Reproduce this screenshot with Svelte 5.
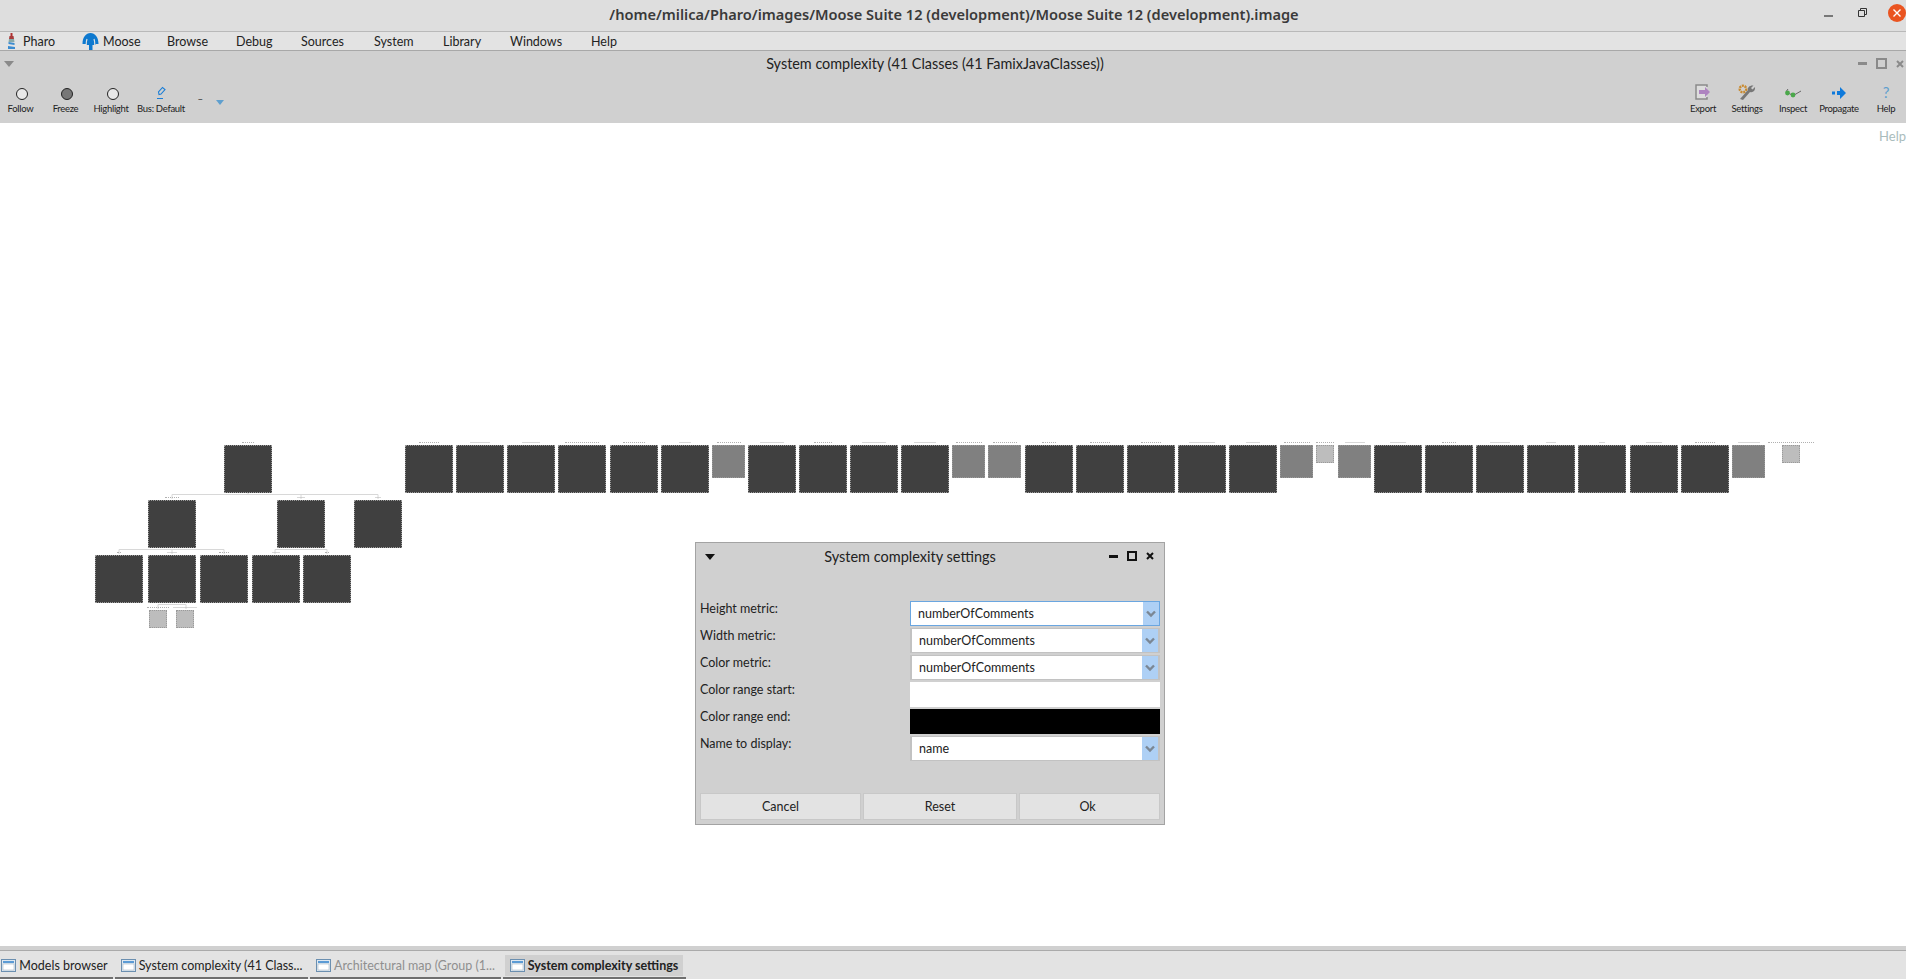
<script lang="ts">
	const menu = [
		{ label: 'Pharo', w: 75 },
		{ label: 'Moose', w: 85 },
		{ label: 'Browse', w: 69 },
		{ label: 'Debug', w: 65 },
		{ label: 'Sources', w: 73 },
		{ label: 'System', w: 69 },
		{ label: 'Library', w: 67 },
		{ label: 'Windows', w: 81 },
		{ label: 'Help', w: 40 }
	];

	const D = 48;
	const M = 33;
	const L = 18;

	// x, y, size, height, tone, label width
	const nodes = [
		[224, 445, D, D, 'dark', 12],
		[148, 500, D, D, 'dark', 14],
		[277, 500, D, D, 'dark', 7],
		[354, 500, D, D, 'dark', 5],
		[95, 555, D, D, 'dark', 4],
		[148, 555, D, D, 'dark', 9],
		[200, 555, D, D, 'dark', 10],
		[252, 555, D, D, 'dark', 7],
		[303, 555, D, D, 'dark', 4],
		[149, 610, L, L, 'light', 22],
		[176, 610, L, L, 'light', 23],
		[405, 445, D, D, 'dark', 20],
		[456, 445, D, D, 'dark', 19],
		[507, 445, D, D, 'dark', 17],
		[558, 445, D, D, 'dark', 34],
		[610, 445, D, D, 'dark', 22],
		[661, 445, D, D, 'dark', 11],
		[712, 445, M, M, 'mid', 24],
		[748, 445, D, D, 'dark', 23],
		[799, 445, D, D, 'dark', 18],
		[850, 445, D, D, 'dark', 23],
		[901, 445, D, D, 'dark', 21],
		[952, 445, M, M, 'mid', 26],
		[988, 445, M, M, 'mid', 24],
		[1025, 445, D, D, 'dark', 14],
		[1076, 445, D, D, 'dark', 20],
		[1127, 445, D, D, 'dark', 20],
		[1178, 445, D, D, 'dark', 25],
		[1229, 445, D, D, 'dark', 13],
		[1280, 445, M, M, 'mid', 26],
		[1316, 445, L, L, 'light', 18],
		[1338, 445, M, M, 'mid', 19],
		[1374, 445, D, D, 'dark', 15],
		[1425, 445, D, D, 'dark', 14],
		[1476, 445, D, D, 'dark', 19],
		[1527, 445, D, D, 'dark', 9],
		[1578, 445, D, D, 'dark', 5],
		[1630, 445, D, D, 'dark', 15],
		[1681, 445, D, D, 'dark', 20],
		[1732, 445, M, M, 'mid', 21],
		[1782, 445, L, L, 'light', 46]
	] as const;

	const metrics = [
		{ label: 'Height metric:', value: 'numberOfComments', focus: true },
		{ label: 'Width metric:', value: 'numberOfComments' },
		{ label: 'Color metric:', value: 'numberOfComments' },
		{ label: 'Color range start:', colour: 'white' },
		{ label: 'Color range end:', colour: 'black' },
		{ label: 'Name to display:', value: 'name' }
	];

	const tasks = [
		{ label: 'Models browser', w: 113 },
		{ label: 'System complexity (41 Class...', w: 193 },
		{ label: 'Architectural map (Group (1...', w: 191, faded: true },
		{ label: 'System complexity settings', w: 183, active: true }
	];
</script>

<div class="screen">
	<header class="titlebar">
		<span class="title">/home/milica/Pharo/images/Moose Suite 12 (development)/Moose Suite 12 (development).image</span>
		<div class="wm">
			<svg width="14" height="14" viewBox="0 0 14 14"><path d="M2 10h9" stroke="#333" stroke-width="1.2" /></svg>
			<svg width="14" height="14" viewBox="0 0 14 14"><path d="M3.5 4.5h6v6h-6zM5.5 4.5v-2h6v6h-2" fill="none" stroke="#333" /></svg>
			<span class="close">
				<svg width="10" height="10" viewBox="0 0 10 10"><path d="M1.5 1.5l7 7M8.5 1.5l-7 7" stroke="#fff" stroke-width="1.4" /></svg>
			</span>
		</div>
	</header>

	<nav class="menubar">
		{#each menu as item, i}
			<div class="menu-item" style="width: {item.w}px">
				{#if i === 0}
					<svg class="pharo" width="9" height="18" viewBox="0 0 9 18">
						<path d="M3.5 1h2v3h-2z" fill="#b03030" />
						<path d="M2.5 4h4l.5 3H2z" fill="#a83a3a" />
						<path d="M2 7h5l.5 3h-6z" fill="#8aa" />
						<path d="M1.5 10l6 1v2l-6-1zM1 14l7 1v2H1z" fill="#3b8bd0" />
					</svg>
				{:else if i === 1}
					<svg class="moose" width="17" height="18" viewBox="0 0 17 18">
						<path d="M0.5 12C0.500 5 4 1 8.500 1S16.500 5 16.500 12h-3V13h-3v5h-3.500v-5h-3V12z" fill="#0e79cf" />
						<path d="M5 7C4.400 8.500 4.200 10 4.200 13M12 7c.6 1.500.8 3 .8 6" fill="none" stroke="#e3e3e3" stroke-width="1.200" />
					</svg>
				{/if}
				<span>{item.label}</span>
			</div>
		{/each}
	</nav>

	<section class="panel">
		<div class="panel-title">
			<svg class="collapse" width="10" height="6" viewBox="0 0 10 6"><path d="M0 0h10L5 6z" fill="#8a8a8a" /></svg>
			<span>System complexity (41 Classes (41 FamixJavaClasses))</span>
			<div class="panel-controls">
				<span class="ctl-min"></span>
				<span class="ctl-max"></span>
				<svg width="8" height="8" viewBox="0 0 8 8"><path d="M1 1l6 6M7 1l-6 6" stroke="#8a8a8a" stroke-width="2" /></svg>
			</div>
		</div>
		<div class="toolbar">
			<div class="tools left">
				<div class="tool" style="width: 41px">
					<span class="radio"></span>
					<small>Follow</small>
				</div>
				<div class="tool" style="width: 49px">
					<span class="radio on"></span>
					<small>Freeze</small>
				</div>
				<div class="tool" style="width: 42px">
					<span class="radio"></span>
					<small>Highlight</small>
				</div>
				<div class="tool" style="width: 58px">
					<svg width="14" height="14" viewBox="0 0 14 14">
						<path d="M5 8.500l-.5-2.500 4-4.500 2.500 2-4 4.500zM3 12.500h6" fill="none" stroke="#1b7ed6" stroke-width="1.100" />
					</svg>
					<small>Bus: Default</small>
				</div>
				<span class="dash">_</span>
				<svg class="drop" width="8" height="6" viewBox="0 0 8 6"><path d="M0 0h8L4 5z" fill="#5f9fce" /></svg>
			</div>
			<div class="tools right">
				<div class="tool" style="width: 34px">
					<svg width="16" height="16" viewBox="0 0 16 16">
						<path d="M12 3V1H1v14h11v-2" fill="#ddd" stroke="#8a8a8a" stroke-width="1.500" />
						<path d="M4 6h6V3l5 5-5 5v-3H4z" fill="#ae84c0" />
					</svg>
					<small>Export</small>
				</div>
				<div class="tool" style="width: 54px">
					<svg width="18" height="16" viewBox="0 0 18 16">
						<circle cx="5" cy="5" r="3.300" fill="none" stroke="#c98a2f" stroke-width="2.400" stroke-dasharray="2 .8" />
						<path d="M2 15l8-9c-.5-2.500 1.500-5 5.500-4.500L13 4l1.500 1.500 2.500-2.500c.5 3.500-2 6-5 5L5 16z" fill="#777" />
					</svg>
					<small>Settings</small>
				</div>
				<div class="tool" style="width: 38px">
					<svg width="18" height="14" viewBox="0 0 18 14">
						<circle cx="3.500" cy="7" r="2.400" fill="#4aa84a" />
						<circle cx="9" cy="9" r="2.400" fill="#4aa84a" />
						<path d="M5.500 7.500L7 8.500M11 8.500l6-3.500M2.500 5l1.500-2" fill="none" stroke="#666" />
					</svg>
					<small>Inspect</small>
				</div>
				<div class="tool" style="width: 54px">
					<svg width="14" height="14" viewBox="0 0 14 14">
						<path d="M0 5.500h3v3H0zM5 5h3V1l6 6-6 6V9H5z" fill="#0f7adb" />
					</svg>
					<small>Propagate</small>
				</div>
				<div class="tool help-tool" style="width: 40px">
					<span class="qmark">?</span>
					<small>Help</small>
				</div>
			</div>
		</div>
	</section>

	<main class="canvas">
		<span class="help-link">Help</span>

		<svg class="edges" width="1906" height="540" viewBox="0 123 1906 540">
			<path d="M172 494.500H378M172 494.500V499M301 494.500V499M378 494.500V499M248 493V494.500" fill="none" stroke="#d8d8d8" />
			<path d="M119 549.500H224M119 549.500V554M172 549.500V554M224 549.500V554" fill="none" stroke="#d8d8d8" />
			<path d="M275 549.500H327M275 549.500V554M327 549.500V554" fill="none" stroke="#d8d8d8" />
			<path d="M158 604.500H186M158 604.500V609M186 604.500V609" fill="none" stroke="#d8d8d8" />
		</svg>

		{#each nodes as [x, y, w, h, tone, lw]}
			<div class="node {tone}" style="left: {x}px; top: {y - 123}px; width: {w}px; height: {h}px">
				<i style="width: {lw}px"></i>
			</div>
		{/each}

		<div class="dialog">
			<div class="dialog-title">
				<svg class="dialog-menu" width="10" height="6" viewBox="0 0 10 6"><path d="M0 0h10L5 6z" fill="#111" /></svg>
				<span>System complexity settings</span>
				<div class="dialog-controls">
					<span class="d-min"></span>
					<span class="d-max"></span>
					<svg width="8" height="8" viewBox="0 0 8 8"><path d="M1 1l6 6M7 1l-6 6" stroke="#111" stroke-width="2" /></svg>
				</div>
			</div>

			<div class="form">
				{#each metrics as row}
					<label for={row.label}>{row.label}</label>
					{#if row.colour}
						<div class="swatch {row.colour}"></div>
					{:else}
						<div class="select" class:focus={row.focus}>
							<span id={row.label}>{row.value}</span>
							<b>
								<svg width="10" height="8" viewBox="0 0 10 8"><path d="M1 1.500l4 4 4-4" fill="none" stroke="#7b8794" stroke-width="2.400" /></svg>
							</b>
						</div>
					{/if}
				{/each}
			</div>

			<div class="actions">
				<button type="button" style="width: 161px">Cancel</button>
				<button type="button" style="width: 154px">Reset</button>
				<button type="button" class="ok" style="width: 141px">Ok</button>
			</div>
		</div>
	</main>

	<footer class="taskbar">
		{#each tasks as task}
			<div class="task" class:active={task.active} class:faded={task.faded} style="width: {task.w}px">
				<div class="task-inner">
					<svg width="15" height="13" viewBox="0 0 15 13">
						<rect x=".5" y=".5" width="14" height="12" fill="#dfe8f0" stroke="#6b8fb0" />
						<rect x="2" y="2" width="11" height="2" fill="#5b9bd5" />
						<rect x="2" y="5" width="11" height="6" fill="#fff" stroke="#9ab" stroke-width=".5" />
					</svg>
					<span>{task.label}</span>
				</div>
			</div>
		{/each}
	</footer>
</div>

<style>
	:global(body) {
		margin: 0;
		overflow: hidden;
	}

	.screen {
		display: flex;
		flex-direction: column;
		width: 1906px;
		height: 979px;
		overflow: hidden;
		font-family: 'Lato', 'Noto Sans', sans-serif;
		font-size: 12.5px;
		color: #222;
		background: white;
	}

	.titlebar {
		position: relative;
		display: flex;
		align-items: center;
		justify-content: center;
		flex: 0 0 32px;
		box-sizing: border-box;
		background: #dedede;
		border-bottom: 1px solid #b9b9b9;
		font-family: 'Noto Sans', sans-serif;
		font-weight: 600;
		font-size: 14.6px;
		color: #3a3a3a;
	}

	.title {
		margin-left: 2px;
		margin-bottom: 4px;
	}

	.wm {
		position: absolute;
		right: 0;
		top: 4px;
		display: flex;
		align-items: center;
		gap: 19px;
	}

	.close {
		display: grid;
		place-items: center;
		width: 18px;
		height: 18px;
		border-radius: 50%;
		background: #ea5420;
	}

	.menubar {
		display: flex;
		flex: 0 0 19px;
		box-sizing: border-box;
		height: 19px;
		background: #e3e3e3;
		border-bottom: 1px solid #a8a8a8;
		padding-left: 7px;
	}

	.menu-item {
		position: relative;
		display: flex;
		align-items: center;
		gap: 2px;
		flex: none;
		height: 18px;
	}

	.menu-item:first-child {
		padding-left: 16px;
		box-sizing: border-box;
	}

	.pharo {
		position: absolute;
		left: 0;
		top: 0;
	}

	.moose {
		margin-right: 2px;
	}

	.panel {
		flex: 0 0 72px;
		background: #d0d0d0;
		display: flex;
		flex-direction: column;
	}

	.panel-title {
		position: relative;
		display: flex;
		align-items: center;
		justify-content: center;
		height: 25px;
		padding-right: 36px;
		font-size: 14.4px;
	}

	.collapse {
		position: absolute;
		left: 4px;
		top: 10px;
	}

	.panel-controls {
		position: absolute;
		right: 2px;
		top: 0;
		bottom: 0;
		display: flex;
		align-items: center;
		gap: 9px;
	}

	.ctl-min {
		width: 9px;
		height: 3px;
		background: #8a8a8a;
	}

	.ctl-max {
		width: 7px;
		height: 7px;
		border: 2px solid #8a8a8a;
	}

	.toolbar {
		display: flex;
		justify-content: space-between;
		flex: 1;
	}

	.tools {
		display: flex;
		align-items: flex-start;
	}

	.tool {
		display: flex;
		flex-direction: column;
		align-items: center;
		justify-content: flex-end;
		flex: none;
		height: 39px;
	}

	.tool small {
		margin-top: 3px;
		font-size: 9.5px;
		line-height: 12px;
		letter-spacing: -0.3px;
		white-space: nowrap;
	}

	.radio {
		box-sizing: border-box;
		width: 12px;
		height: 12px;
		margin-left: 3px;
		border: 1.5px solid #222;
		border-radius: 50%;
		background: #e8e8e8;
	}

	.radio.on {
		background: #777;
	}

	.dash {
		margin: 12px 0 0 8px;
		font-size: 10px;
	}

	.drop {
		margin: 24px 0 0 13px;
	}

	.qmark {
		color: #5f9fce;
		font-size: 15px;
		line-height: 16px;
	}

	.canvas {
		position: relative;
		flex: 1;
		background: white;
	}

	.help-link {
		position: absolute;
		right: 0;
		top: 5px;
		color: #a9bcbc;
		font-size: 13px;
	}

	.edges {
		position: absolute;
		left: 0;
		top: 0;
	}

	.node {
		position: absolute;
		box-sizing: border-box;
		outline: 1px dotted #9a9a9a;
		outline-offset: -1px;
	}

	.node i {
		position: absolute;
		left: 50%;
		top: -3px;
		height: 0;
		border-top: 1px dotted #b0b0b0;
		transform: translateX(-50%);
	}

	.dark {
		background: #404040;
	}

	.mid {
		background: #808080;
	}

	.light {
		background: #bdbdbd;
	}

	.dialog {
		position: absolute;
		left: 695px;
		top: 419px;
		box-sizing: border-box;
		width: 470px;
		height: 283px;
		display: flex;
		flex-direction: column;
		border: 1px solid #a3a3a3;
		background: #d0d0d0;
	}

	.dialog-title {
		position: relative;
		display: flex;
		align-items: center;
		justify-content: center;
		height: 26px;
		font-size: 14.5px;
		padding-right: 40px;
	}

	.dialog-menu {
		position: absolute;
		left: 9px;
		top: 11px;
	}

	.dialog-controls {
		position: absolute;
		right: 10px;
		top: 0;
		bottom: 0;
		display: flex;
		align-items: center;
		gap: 9px;
	}

	.d-min {
		width: 9px;
		height: 3px;
		background: #111;
	}

	.d-max {
		width: 6px;
		height: 6px;
		border: 2px solid #111;
	}

	.form {
		display: grid;
		grid-template-columns: 210px 250px;
		grid-auto-rows: 25px;
		row-gap: 2px;
		margin: 32px 0 0 4px;
	}

	.form label {
		line-height: 16px;
	}

	.select {
		display: flex;
		box-sizing: border-box;
		height: 25px;
		border: 1px solid #c2c2c2;
		border-width: 1px 2px;
		background: white;
	}

	.select.focus {
		border: 1px solid #6aa6e0;
	}

	.select span {
		flex: 1;
		align-self: center;
		padding-left: 7px;
	}

	.select b {
		display: grid;
		place-items: center;
		width: 16px;
		background: #aed0f5;
	}

	.swatch {
		height: 25px;
	}

	.swatch.white {
		background: white;
	}

	.swatch.black {
		background: black;
	}

	.actions {
		display: flex;
		gap: 2px;
		margin: auto 0 4px 4px;
	}

	.actions button {
		height: 27px;
		flex: none;
		padding: 0;
		border: 1px solid #c8c8c8;
		background: #e3e3e3;
		color: #222;
		font: inherit;
	}

	.actions .ok {
		padding-right: 4px;
	}

	.taskbar {
		display: flex;
		flex: 0 0 33px;
		box-sizing: border-box;
		gap: 2px;
		padding-top: 5px;
		background: #e3e3e3;
		border-top: 4px solid #d0d0d0;
		box-shadow: inset 0 1px 0 #aaa;
	}

	.task {
		flex: none;
		box-sizing: border-box;
		height: 24px;
		border-bottom: 2px solid #6f6f6f;
		white-space: nowrap;
	}

	.task:first-child .task-inner {
		padding-right: 4px;
	}

	.task-inner {
		display: flex;
		align-items: center;
		justify-content: center;
		gap: 3px;
		height: 21px;
	}

	.faded span {
		color: #8f8f8f;
	}

	.active .task-inner {
		margin: 0 3px 0 2px;
		background: #d0d0d0;
		font-weight: 700;
	}
</style>
